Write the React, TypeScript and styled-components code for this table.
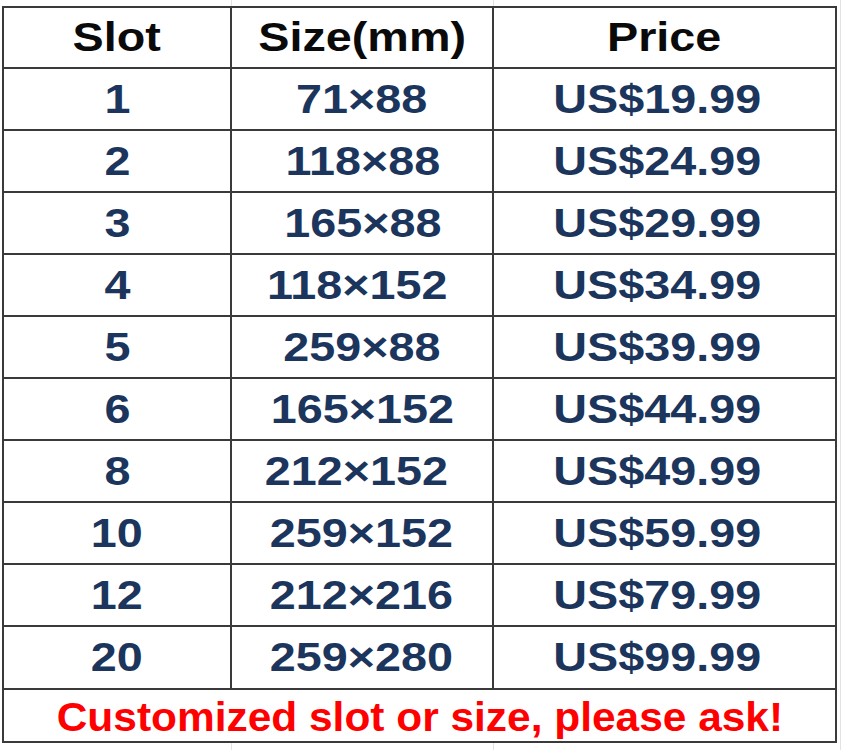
import React from "react";
import styled, { createGlobalStyle } from "styled-components";

const Global = createGlobalStyle`
  html, body { margin: 0; padding: 0; background: #ffffff; }
  body { font-family: "Liberation Sans", Arial, sans-serif; }
`;

const Page = styled.div`
  padding: 6px 0 0 2px;
  width: 842px;
  height: 750px;
  box-sizing: border-box;
  background:
    linear-gradient(#e3e3e3, #e3e3e3) 231px 0 / 1px 6px no-repeat,
    linear-gradient(#e3e3e3, #e3e3e3) 493px 0 / 1px 6px no-repeat,
    linear-gradient(#e3e3e3, #e3e3e3) 840px 0 / 1px 750px no-repeat,
    linear-gradient(#e3e3e3, #e3e3e3) 231px 743px / 1px 7px no-repeat,
    linear-gradient(#e3e3e3, #e3e3e3) 493px 743px / 1px 7px no-repeat,
    #ffffff;
`;

const Grid = styled.div`
  display: grid;
  width: 835px;
  box-sizing: border-box;
  grid-template-columns: 226px 260px 341px;
  grid-template-rows: 59px repeat(9, 60px) 61px 51px;
  gap: 2px;
  padding: 2px;
  background: #3a3a3a;
`;

const Cell = styled.div<{ $tone: "head" | "body"; $shift?: number }>`
  background: #ffffff;
  display: flex;
  align-items: center;
  justify-content: center;
  padding-right: ${(p) => (p.$shift && p.$shift > 0 ? p.$shift : 0)}px;
  padding-left: ${(p) => (p.$shift && p.$shift < 0 ? -p.$shift : 0)}px;
  color: ${(p) => (p.$tone === "head" ? "#0a0a0a" : "#1b355c")};
  font-weight: 700;
  font-size: 41px;
  line-height: 1;
  overflow: hidden;
`;

const Footer = styled.div`
  grid-column: 1 / -1;
  background: #ffffff;
  display: flex;
  align-items: center;
  justify-content: center;
  color: #ff0000;
  font-weight: 700;
  font-size: 41px;
  line-height: 1;
  padding-top: 3px;
  overflow: hidden;
`;

const Stretch = styled.span<{ $x?: number }>`
  display: inline-block;
  transform: scaleX(${(p) => p.$x ?? 1.14});
  white-space: pre;
`;

const rows: [string, string, string, number][] = [
  ["1", "71×88", "US$19.99", 0],
  ["2", "118×88", "US$24.99", -2],
  ["3", "165×88", "US$29.99", -2],
  ["4", "118×152", "US$34.99", 10],
  ["5", "259×88", "US$39.99", 0],
  ["6", "165×152", "US$44.99", 0],
  ["8", "212×152", "US$49.99", 12],
  ["10", "259×152", "US$59.99", 2],
  ["12", "212×216", "US$79.99", 2],
  ["20", "259×280", "US$99.99", 2],
];

export default function App() {
  return (
    <>
      <Global />
      <Page>
        <Grid>
          <Cell $tone="head"><Stretch>Slot</Stretch></Cell>
          <Cell $tone="head"><Stretch>Size(mm)</Stretch></Cell>
          <Cell $tone="head"><Stretch>Price</Stretch></Cell>
          {rows.map(([slot, size, price, shift]) => (
            <React.Fragment key={slot}>
              <Cell $tone="body"><Stretch>{slot}</Stretch></Cell>
              <Cell $tone="body" $shift={shift}><Stretch>{size}</Stretch></Cell>
              <Cell $tone="body" $shift={14}><Stretch>{price}</Stretch></Cell>
            </React.Fragment>
          ))}
          <Footer><Stretch $x={1.035}>Customized slot or size, please ask!</Stretch></Footer>
        </Grid>
      </Page>
    </>
  );
}
